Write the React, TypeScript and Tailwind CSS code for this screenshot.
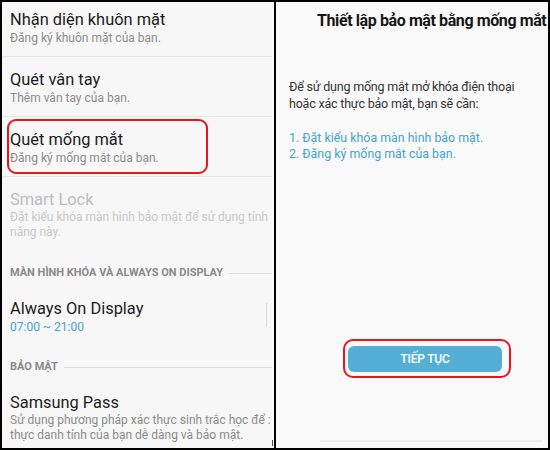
import React from "react";

const font = { fontFamily: "Roboto, 'Noto Sans', sans-serif" };

type RowProps = {
  title: string;
  lines: string[];
  dim?: boolean;
  blue?: boolean;
  className?: string;
  children?: React.ReactNode;
};

function Row({ title, lines, dim, blue, className, children }: RowProps) {
  return (
    <div className={"relative pl-2 " + (className || "")}>
      <div
        className={
          "text-[16.4px] leading-[20px] whitespace-nowrap " +
          (dim ? "text-[#bdbdbd]" : "text-[#1c1c1c]")
        }
      >
        {title}
      </div>
      {lines.map((l) => (
        <div
          key={l}
          className={
            "text-[12px] whitespace-nowrap " +
            (lines.length > 1 ? "leading-[15px] " : "leading-[16px] ") +
            (dim ? "text-[#c9c9c9]" : blue ? "text-[#4aa2c9]" : "text-[#8c8c8c]")
          }
        >
          {l}
        </div>
      ))}
      {children}
    </div>
  );
}

function SectionHeader({ label, className }: { label: string; className?: string }) {
  return (
    <div className={"flex items-center pl-2 pr-[2px] " + (className || "")}>
      <span className="text-[11px] font-bold text-[#8a8a8a] whitespace-nowrap">
        {label}
      </span>
      <div className="flex-1 h-px bg-[#dedede] ml-[6px]" />
    </div>
  );
}

export default function App() {
  return (
    <div
      className="w-[550px] h-[450px] bg-black p-[2px] flex gap-[2px] overflow-hidden"
      style={font}
    >
      {/* left: settings list */}
      <div className="relative w-[272px] h-full bg-[#f7f7f7] overflow-hidden">
        <div className="-mt-[5px]">
          <Row
            title="Nhận diện khuôn mặt"
            lines={["Đăng ký khuôn mặt của bạn."]}
            className="h-[60px] pt-[13px] border-b border-[#e4e4e4] mr-[2px]"
          />
          <Row
            title="Quét vân tay"
            lines={["Thêm vân tay của bạn."]}
            className="h-[60px] pt-[13px] border-b border-[#e4e4e4] mr-[2px]"
          />
          <Row
            title="Quét mống mắt"
            lines={["Đăng ký mống mắt của bạn."]}
            className="h-[60px] pt-[13px] border-b border-[#e4e4e4] mr-[2px]"
          >
            <div className="absolute left-[5px] top-[2px] w-[201px] h-[55px] border-2 border-[#e8151b] rounded-[9px]" />
          </Row>
          <Row
            title="Smart Lock"
            dim
            lines={["Đặt kiểu khóa màn hình bảo mật để sử dụng tính", "năng này."]}
            className="pt-[13px] pb-[13px]"
          />
          <SectionHeader label="MÀN HÌNH KHÓA VÀ ALWAYS ON DISPLAY" className="h-[40px]" />
          <Row
            title="Always On Display"
            blue
            lines={["07:00 ~ 21:00"]}
            className="pt-[6px] pb-[14px]"
          />
          <SectionHeader label="BẢO MẬT" className="h-[36px]" />
          <Row
            title="Samsung Pass"
            lines={[
              "Sử dụng phương pháp xác thực sinh trắc học để :",
              "thực danh tính của bạn dễ dàng và bảo mật.",
            ]}
            className="pt-[8px]"
          />
        </div>
        {/* scroll marks */}
        <div className="absolute left-[264px] top-[301px] w-px h-[24px] bg-[#d8d8d8]" />
        <div className="absolute left-[270px] top-[438px] w-px h-[6px] bg-[#555]" />
      </div>

      {/* right: iris setup */}
      <div className="w-[272px] h-full bg-[#f9f9f9] flex flex-col">
        <div className="pt-[9px] pl-[41px] text-[16px] leading-[20px] font-bold tracking-[-0.4px] text-[#161616] whitespace-nowrap">
          Thiết lập bảo mật bằng mống mắt
        </div>
        <p className="mt-[47px] pl-[13px] text-[12.5px] leading-[17px] tracking-[-0.2px] text-[#333] whitespace-nowrap">
          Để sử dụng mống mắt mở khóa điện thoại
          <br />
          hoặc xác thực bảo mật, bạn sẽ cần:
        </p>
        <div className="mt-[18px] pl-[13px] text-[12.4px] leading-[16px] text-[#45a3cb] whitespace-nowrap">
          <div>1. Đặt kiểu khóa màn hình bảo mật.</div>
          <div>2. Đăng ký mống mắt của bạn.</div>
        </div>
        <div className="ml-[67px] mt-[177px] w-[168px] h-[39px] border-2 border-[#e8151b] rounded-[10px] pl-[3px] pt-[5px]">
          <button className="w-[154px] h-[26px] rounded-[6px] bg-[#55afd5] text-white text-[12px] font-medium tracking-[-0.2px]">
            TIẾP TỤC
          </button>
        </div>
        <div className="mt-[62px] ml-[44px] mr-[6px] h-[2px] bg-[#ececec]" />
      </div>
    </div>
  );
}
